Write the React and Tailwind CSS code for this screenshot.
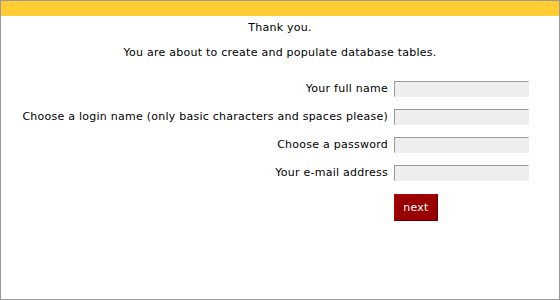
export default function App() {
  const rows = [
    "Your full name",
    "Choose a login name (only basic characters and spaces please)",
    "Choose a password",
    "Your e-mail address",
  ];
  return (
    <div
      className="w-[560px] h-[300px] border border-[#999999] bg-white text-[11px] tracking-[0.25px] text-black"
      style={{ fontFamily: '"DejaVu Sans", Verdana, sans-serif' }}
    >
      <div className="h-[15px] bg-[#ffcc33]" />
      <div className="mt-[5px] h-[14px] leading-[14px] text-center">Thank you.</div>
      <div className="mt-[11px] h-[14px] leading-[14px] text-center">
        You are about to create and populate database tables.
      </div>
      <div className="mt-[21px] flex justify-end pr-[30px]">
        <div className="grid grid-cols-[auto_135px] gap-x-[6px] gap-y-[12px] items-center">
          {rows.map((r) => (
            <div key={r} className="contents">
              <div className="text-right leading-[14px]">{r}</div>
              <input
                className="h-[16px] w-[135px] bg-[#eeeeee] border-t border-l border-t-[#999999] border-l-[#999999] border-b border-r border-b-[#eeeeee] border-r-[#eeeeee] outline-none"
                type="text"
              />
            </div>
          ))}
          <div />
          <div className="mt-[1px]">
            <button className="w-[44px] h-[27px] bg-[#990000] text-white text-[11px] tracking-[0.25px] border border-t-[#bb0000] border-l-[#bb0000] border-b-[#660000] border-r-[#660000] leading-[14px]">
              next
            </button>
          </div>
        </div>
      </div>
    </div>
  );
}
